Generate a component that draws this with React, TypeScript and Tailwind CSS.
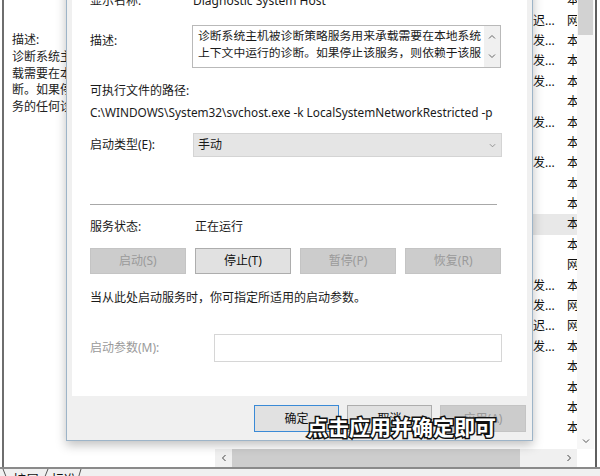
import React from 'react';

const font = 'font-["Noto_Sans","Noto_Sans_CJK_SC",sans-serif]';

type Row = { a: string; b: string; sel?: boolean };

const listRows: Row[] = [
  { a: '', b: '本' },
  { a: '迟...', b: '网' },
  { a: '发...', b: '本' },
  { a: '发...', b: '本' },
  { a: '发...', b: '本' },
  { a: '', b: '本' },
  { a: '发...', b: '本' },
  { a: '', b: '本' },
  { a: '发...', b: '本' },
  { a: '', b: '本' },
  { a: '', b: '本' },
  { a: '', b: '本', sel: true },
  { a: '', b: '本' },
  { a: '', b: '网' },
  { a: '发...', b: '本' },
  { a: '发...', b: '网' },
  { a: '迟...', b: '网' },
  { a: '发...', b: '本' },
  { a: '', b: '本' },
  { a: '', b: '本' },
  { a: '', b: '本' },
  { a: '', b: '本' },
];

const Chevron = ({ dir = 'down', className = '' }: { dir?: 'down' | 'up' | 'left' | 'right'; className?: string }) => {
  const d = {
    down: 'M1 2.5 L4 5.5 L7 2.5',
    up: 'M1 5.5 L4 2.5 L7 5.5',
    left: 'M5.5 1 L2.5 4 L5.5 7',
    right: 'M2.5 1 L5.5 4 L2.5 7',
  }[dir];
  return (
    <svg viewBox="0 0 8 8" className={className} fill="none" stroke="currentColor" strokeWidth="1">
      <path d={d} />
    </svg>
  );
};

const WinButton = ({ label, disabled, primary }: { label: string; disabled?: boolean; primary?: boolean }) => (
  <div
    className={`h-full flex items-center justify-center text-[12px] border ${
      disabled
        ? 'bg-[#cccccc] border-[#c4c4c4] text-[#9a9a9a]'
        : primary
          ? 'bg-[#e1e1e1] border-[#3a8ad6] text-[#111]'
          : 'bg-[#e1e1e1] border-[#adadad] text-[#111]'
    }`}
  >
    {label}
  </div>
);

const Background = () => (
  <div className="flex flex-col h-full">
    <div className="flex h-[467px]">
      {/* left description pane */}
      <div className="w-[213px] border-l-2 border-[#6e6e6e] ml-[2px] bg-white pl-[8px] pt-[32px] text-[12px] leading-[16.8px] text-[#222] whitespace-nowrap overflow-hidden">
        <div>描述:</div>
        <div>诊断系统主机被诊断策略服务用来承</div>
        <div>载需要在本地系统上下文中运行的诊</div>
        <div>断。如果停止该服务，则依赖于该服</div>
        <div>务的任何诊断将不再运行。</div>
      </div>
      {/* right list pane */}
      <div className="flex-1 flex flex-col">
        <div className="flex h-[449px]">
          <div className="flex-1 overflow-hidden">
            <div className="mt-[-10px] text-[12px] text-[#111]">
              {listRows.map((r, i) => (
                <div key={i} className={`h-[20.4px] flex items-center pl-[318px] ${r.sel ? 'bg-[#e8e8e8]' : ''}`}>
                  <div className="w-[34px] shrink-0 whitespace-nowrap">{r.a}</div>
                  <div className="w-[10px] shrink-0 overflow-hidden whitespace-nowrap">{r.b}</div>
                </div>
              ))}
            </div>
          </div>
          <div className="w-[17px] bg-[#f7f7f7] flex flex-col">
            <div className="h-[35px] mx-[1px] bg-[#d2d2d2]" />
            <div className="flex-1" />
            <div className="h-[17px] flex items-center justify-center text-[#555]">
              <Chevron className="w-[8px] h-[8px]" />
            </div>
          </div>
        </div>
        <div className="flex h-[18px]">
          <div className="w-[17px] flex items-center justify-center text-[#444] bg-[#f0f0f0]">
            <Chevron dir="left" className="w-[8px] h-[8px]" />
          </div>
          <div className="w-[288px] bg-[#cdcdcd]" />
          <div className="flex-1 bg-[#f0f0f0]" />
          <div className="w-[17px] flex items-center justify-center text-[#444] bg-[#f0f0f0]">
            <Chevron dir="right" className="w-[8px] h-[8px]" />
          </div>
          <div className="w-[17px] bg-white" />
        </div>
      </div>
      <div className="w-[6px] bg-white pl-[1px]">
        <div className="w-[2px] h-full bg-[#5f5f5f]" />
      </div>
    </div>
    {/* bottom tabs */}
    <div className="flex-1 border-t-2 border-[#8a8a8a] bg-[#f0f0f0] relative">
      <svg className="absolute left-0 top-0 w-[100px] h-[10px]" viewBox="0 0 100 10" fill="none" stroke="#555" strokeWidth="1">
        <path d="M3 0 L7 10" />
        <path d="M44 10 L48 0" />
        <path d="M78 10 L81 0" />
      </svg>
      <div className="flex text-[13px] text-[#111] pl-[13px] pt-[2px] leading-[16px]">
        <span>扩展</span>
        <span className="ml-[12px]">标准</span>
      </div>
    </div>
  </div>
);

const Dialog = () => (
  <div className="absolute left-[66px] top-[-40px] w-[467px] h-[481px] bg-[#f0f0f0] border border-[#9db4c8] shadow-[0_4px_10px_rgba(0,0,0,0.25)] flex flex-col">
    <div className="flex-1 bg-white mx-[5px] pt-[32px] pl-[18px] text-[12px] text-[#1a1a1a]">
      <div className="flex h-[16px] items-center">
        <div className="w-[103px]">显示名称:</div>
        <div>Diagnostic System Host</div>
      </div>
      <div className="flex mt-[16px]">
        <div className="w-[102px] pt-[8px] leading-[16px]">描述:</div>
        <div className="w-[309px] h-[43px] border border-[#b9b9b9] flex">
          <div className="flex-1 pl-[5px] pt-[1px] text-[11.8px] leading-[17px] overflow-hidden whitespace-nowrap">
            <div>诊断系统主机被诊断策略服务用来承载需要在本地系统</div>
            <div>上下文中运行的诊断。如果停止该服务，则依赖于该服</div>
          </div>
          <div className="w-[16px] bg-[#f0f0f0] flex flex-col items-center justify-between py-[7px] text-[#666]">
            <Chevron dir="up" className="w-[8px] h-[8px]" />
            <Chevron dir="down" className="w-[8px] h-[8px]" />
          </div>
        </div>
      </div>
      <div className="mt-[15px] h-[16px] leading-[16px]">可执行文件的路径:</div>
      <div className="mt-[5px] h-[16px] leading-[16px] text-[11.8px] whitespace-nowrap">
        C:\WINDOWS\System32\svchost.exe -k LocalSystemNetworkRestricted -p
      </div>
      <div className="flex items-center mt-[13px]">
        <div className="w-[103px]">启动类型(E):</div>
        <div className="w-[309px] h-[24px] bg-[#e5e5e5] border border-[#d4d4d4] flex items-center pl-[4px] pr-[5px]">
          <div className="flex-1">手动</div>
          <Chevron className="w-[7px] h-[7px] text-[#888]" />
        </div>
      </div>
      <div className="mt-[47px] w-[407px] border-t border-[#a8a8a8]" />
      <div className="flex items-center mt-[14px] h-[16px]">
        <div className="w-[105px]">服务状态:</div>
        <div>正在运行</div>
      </div>
      <div className="grid grid-cols-4 gap-[9.5px] w-[411px] h-[26px] mt-[13px]">
        <WinButton label="启动(S)" disabled />
        <WinButton label="停止(T)" />
        <WinButton label="暂停(P)" disabled />
        <WinButton label="恢复(R)" disabled />
      </div>
      <div className="mt-[16px] h-[16px] leading-[16px] whitespace-nowrap">当从此处启动服务时，你可指定所适用的启动参数。</div>
      <div className="flex items-center mt-[28px]">
        <div className="w-[124px] text-[#9a9a9a]">启动参数(M):</div>
        <div className="w-[288px] h-[28px] border border-[#d6d6d6] bg-white" />
      </div>
    </div>
    <div className="h-[44px] flex justify-end gap-[8px] pr-[6px] pt-[9px] pb-[8px]">
      <div className="w-[85px]">
        <WinButton label="确定" primary />
      </div>
      <div className="w-[85px]">
        <WinButton label="取消" />
      </div>
      <div className="w-[86px]">
        <WinButton label="应用(A)" disabled />
      </div>
    </div>
  </div>
);

export default function App() {
  return (
    <div className={`relative w-[600px] h-[476px] overflow-hidden bg-white ${font}`}>
      <Background />
      <Dialog />
      <div className="absolute left-[307px] top-[412px] text-[21px] font-bold text-white leading-[30px] [-webkit-text-stroke:3px_#111] [paint-order:stroke_fill] whitespace-nowrap">
        点击应用并确定即可
      </div>
    </div>
  );
}
